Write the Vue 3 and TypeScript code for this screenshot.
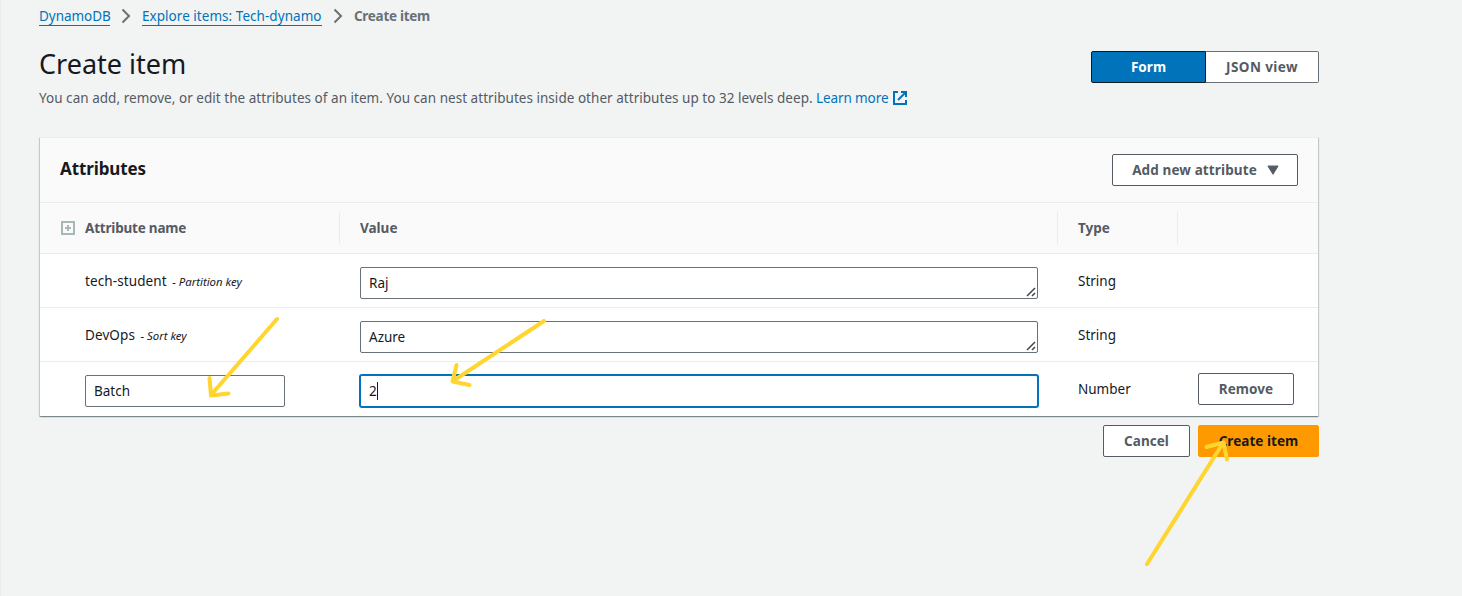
<script setup lang="ts">
interface AttributeRow {
  name: string
  keyLabel?: string
  value: string
  type: string
}

interface Arrow {
  id: string
  shaft: string
  head: string
}

const rows: AttributeRow[] = [
  { name: 'tech-student', keyLabel: '- Partition key', value: 'Raj', type: 'String' },
  { name: 'DevOps', keyLabel: '- Sort key', value: 'Azure', type: 'String' },
  { name: 'Batch', value: '2', type: 'Number' },
]

const arrows: Arrow[] = [
  { id: 'name', shaft: 'M277 319 L211 395', head: 'M209.5 378 L211 395.5 L228.500 393.500' },
  { id: 'value', shaft: 'M544 321 L453 381', head: 'M456.500 365 L452.500 381.500 L469.500 385' },
  { id: 'create', shaft: 'M1147 564 L1223 443', head: 'M1206.500 447 L1223.500 442.500 L1227 459.500' },
]
</script>

<template>
  <main class="page">
    <nav class="crumbs">
      <a class="crumb c1">DynamoDB</a>
      <svg class="chev" width="10" height="16" viewBox="0 0 10 16"><path d="M1.500 1.500 L8 8 L1.500 14.500" /></svg>
      <a class="crumb c2">Explore items: Tech-dynamo</a>
      <svg class="chev" width="10" height="16" viewBox="0 0 10 16"><path d="M1.500 1.500 L8 8 L1.500 14.500" /></svg>
      <span class="current">Create item</span>
    </nav>

    <header class="head">
      <div>
        <h1>Create item</h1>
        <p class="desc">
          <span class="desc-text">You can add, remove, or edit the attributes of an item. You can nest attributes inside other attributes up to 32 levels deep.</span>
          <a class="learn">Learn more</a>
          <svg class="ext" width="14" height="14" viewBox="0 0 14 14">
            <path d="M5 1 H1 V13 H13 V9" /><path d="M8 1 H13 V6" /><path d="M13 1 L5 9" />
          </svg>
        </p>
      </div>
      <div class="segments">
        <button class="seg on">Form</button>
        <button class="seg json">JSON view</button>
      </div>
    </header>

    <section class="card">
      <div class="card-head">
        <h2>Attributes</h2>
        <button class="btn add">
          <span>Add new attribute</span>
          <svg width="10" height="9" viewBox="0 0 10 9"><path d="M1 1 H9 L5 7.500 Z" /></svg>
        </button>
      </div>
      <div class="grid th">
        <div class="cell name-th">
          <svg class="plus" width="14" height="14" viewBox="0 0 14 14"><path d="M1 1 H13 V13 H1 Z M4 7 H10 M7 4 V10" /></svg>
          <span class="t-name">Attribute name</span>
        </div>
        <div class="cell sep"><span>Value</span></div>
        <div class="cell sep"><span>Type</span></div>
        <div class="cell sep"></div>
      </div>
      <div v-for="row in rows" :key="row.name" class="grid row">
        <div class="cell name">
          <template v-if="row.keyLabel">
            <span class="attr">{{ row.name }}</span><em>{{ row.keyLabel }}</em>
          </template>
          <div v-else class="field short">{{ row.name }}</div>
        </div>
        <div class="cell">
          <div class="field" :class="{ focused: !row.keyLabel }">
            <span>{{ row.value }}</span>
            <i v-if="!row.keyLabel" class="caret"></i>
            <svg v-else class="grip" width="10" height="10" viewBox="0 0 10 10"><path d="M1 9 L9 1 M6 9 L9 6" /></svg>
          </div>
        </div>
        <div class="cell type">{{ row.type }}</div>
        <div class="cell"><button v-if="!row.keyLabel" class="btn remove">Remove</button></div>
      </div>
    </section>

    <footer class="actions">
      <button class="btn cancel">Cancel</button>
      <button class="btn primary">Create item</button>
    </footer>

    <svg class="arrows" width="1462" height="596" viewBox="0 0 1462 596">
      <g v-for="a in arrows" :key="a.id"><path :d="a.shaft" /><path :d="a.head" /></g>
    </svg>
  </main>
</template>

<style>
body { margin: 0; background: #f2f3f3; overflow: hidden; }
</style>

<style scoped>
* { box-sizing: border-box; }
.page {
  position: relative;
  width: 1462px;
  height: 596px;
  padding: 6px 143px 0 38px;
  background: #f2f3f3;
  border-left: 1px solid #eaeded;
  font-family: "Noto Sans", "Open Sans", sans-serif;
  font-size: 13.5px;
  line-height: 20px;
  color: #16191f;
  white-space: nowrap;
}
.crumbs { display: flex; align-items: center; height: 20px; font-size: 13.5px; }
.crumb { color: #0073bb; line-height: 20px; height: 20px; border-bottom: 1px solid #0073bb; }
.c1 { width: 71px; letter-spacing: -0.05px; }
.c2 { width: 180px; letter-spacing: 0.04px; }
.chev { margin: 0 11px; fill: none; stroke: #687078; stroke-width: 2; }
.current { color: #687078; font-weight: 700; font-size: 13.5px; letter-spacing: -0.3px; }
.head { display: flex; justify-content: space-between; height: 111px; padding-top: 20px; }
h1 { margin: 0; font-size: 27px; line-height: 36px; font-weight: 400; }
.desc { display: flex; align-items: center; margin: 6px 0 0; height: 20px; font-size: 13.5px; color: #545b64; }
.desc-text { width: 777px; letter-spacing: 0.034px; }
.learn { width: 77px; color: #0073bb; letter-spacing: -0.1px; }
.ext { fill: none; stroke: #0073bb; stroke-width: 2; }
.segments { display: flex; margin-top: 5px; }
button { font-family: inherit; font-size: 13.5px; line-height: 20px; font-weight: 700; padding: 0; text-align: center; white-space: nowrap; letter-spacing: 0.05px; }
.seg { width: 113px; height: 32px; border: 1px solid #687078; border-left: 0; border-radius: 0 2px 2px 0; background: #fff; color: #545b64; }
.seg.on { width: 115px; border: 1px solid #16191f; border-radius: 2px 0 0 2px; background: #0073bb; color: #fff; }
.seg.json { letter-spacing: 0.4px; }
.card {
  margin-left: 1px;
  width: 1278px;
  height: 279px;
  background: #fff;
  border-top: 1px solid #eaeded;
  box-shadow: 0 1px 1px 0 rgba(0, 28, 36, 0.3), 1px 1px 1px 0 rgba(0, 28, 36, 0.15), -1px 1px 1px 0 rgba(0, 28, 36, 0.15);
}
.card-head { display: flex; justify-content: space-between; height: 64px; padding: 16px 20px 0; background: #fafafa; }
h2 { margin: 5px 0 0; font-size: 17px; letter-spacing: -0.1px; line-height: 20px; font-weight: 700; }
.btn { height: 32px; border: 1px solid #545b64; border-radius: 2px; background: #fff; color: #545b64; }
.add { width: 186px; display: flex; align-items: center; justify-content: center; gap: 10px; letter-spacing: 0.12px; padding-left: 1px; }
.add svg { width: 12px; height: 10.800px; fill: #545b64; stroke: #545b64; stroke-width: 1; stroke-linejoin: round; }
.grid { display: grid; grid-template-columns: 299px 718px 120px 1fr; border-top: 1px solid #eaeded; }
.th { height: 51px; background: #fafafa; color: #545b64; font-weight: 700; font-size: 13.5px; }
.th .cell { display: flex; align-items: center; height: 50px; padding-left: 20px; }
.th .cell.name-th { padding-left: 21px; gap: 10px; }
.t-name { letter-spacing: -0.2px; }
.sep { background: linear-gradient(#eaeded, #eaeded) 0 9px / 1px 32px no-repeat; }
.th .sep { padding-left: 21px; }
.plus { fill: none; stroke: #aab7b8; stroke-width: 2; }
.row { height: 54px; }
.row .cell { padding: 13px 0 0 21px; }
.row .cell.name { padding-left: 45px; display: flex; align-items: flex-start; }
.attr { line-height: 28px; letter-spacing: 0.1px; }
em { font-size: 11.400px; line-height: 30px; margin-left: 5.500px; }
.row .type { line-height: 28px; }
.field { position: relative; width: 678px; height: 32px; padding: 0 8px; border: 1px solid #687078; border-radius: 2px; background: #fff; font-size: 13.5px; line-height: 30px; }
.short { width: 200px; }
.focused { border-color: #0073bb; box-shadow: 0 0 0 1px #0073bb; }
.caret { position: absolute; left: 16px; top: 6px; width: 1px; height: 18px; background: #16191f; }
.grip { position: absolute; right: 1px; bottom: 1px; fill: none; stroke: #444; stroke-width: 1.500; }
.remove { display: block; width: 96px; margin-top: -2px; }
.actions { display: flex; justify-content: flex-end; gap: 8px; margin-top: 9px; }
.cancel { width: 87px; }
.primary { width: 121px; border-color: #ff9900; background: #ff9900; color: #16191f; }
.arrows { position: absolute; left: -1px; top: 0; pointer-events: none; }
.arrows path { fill: none; stroke: #ffd52e; stroke-width: 4; stroke-linecap: round; stroke-linejoin: round; }
</style>
